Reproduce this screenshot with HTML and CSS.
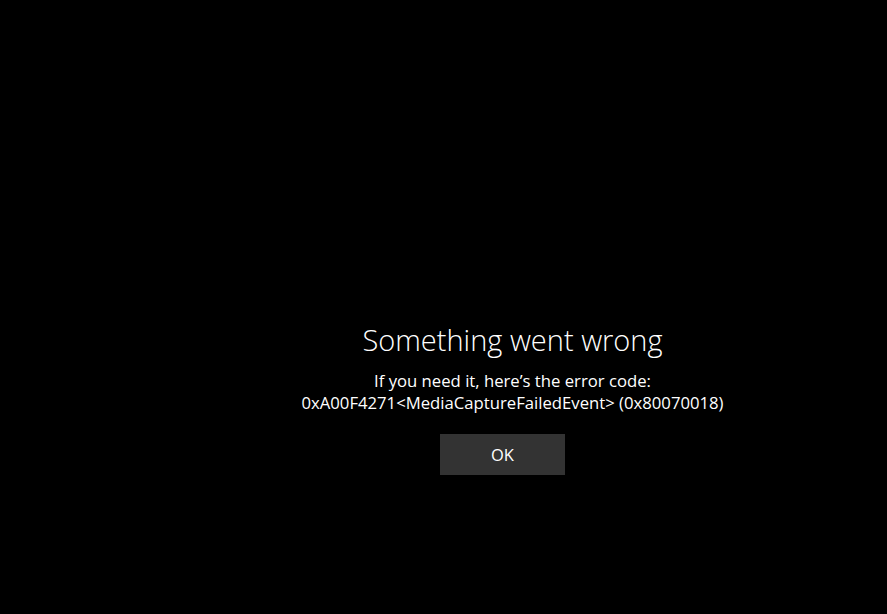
FILE: index.html
```html
<!DOCTYPE html>
<html>
<head>
<meta charset="utf-8">
<link rel="stylesheet" href="styles.css">
</head>
<body>
<main class="screen">
  <section class="dialog">
    <h1 class="title">Something went wrong</h1>
    <p class="message">If you need it, here’s the error code:<br>0xA00F4271&lt;MediaCaptureFailedEvent&gt; (0x80070018)</p>
    <div class="actions"><button class="ok">OK</button></div>
  </section>
</main>
</body>
</html>
```
FILE: styles.css
```css
html, body {
  margin: 0;
  padding: 0;
  background: #000;
  width: 887px;
  height: 614px;
  overflow: hidden;
}
.screen {
  width: 887px;
  height: 614px;
  display: flex;
  justify-content: center;
  padding-left: 138px;
  box-sizing: border-box;
  font-family: "Open Sans", "Noto Sans", sans-serif;
  color: #fff;
}
.dialog {
  padding-top: 320px;
  display: flex;
  flex-direction: column;
  align-items: center;
  text-align: center;
}
.title {
  margin: 0;
  font-size: 29px;
  font-weight: 300;
  line-height: 40px;
}
.message {
  margin: 10px 0 0;
  font-size: 16.7px;
  font-weight: 400;
  line-height: 22px;
}
.actions {
  margin-top: 20px;
  padding-right: 20px;
}
.ok {
  width: 125px;
  height: 41px;
  background: #333;
  border: none;
  color: #fff;
  font-family: "Open Sans", "Noto Sans", sans-serif;
  font-size: 16.5px;
}
```
